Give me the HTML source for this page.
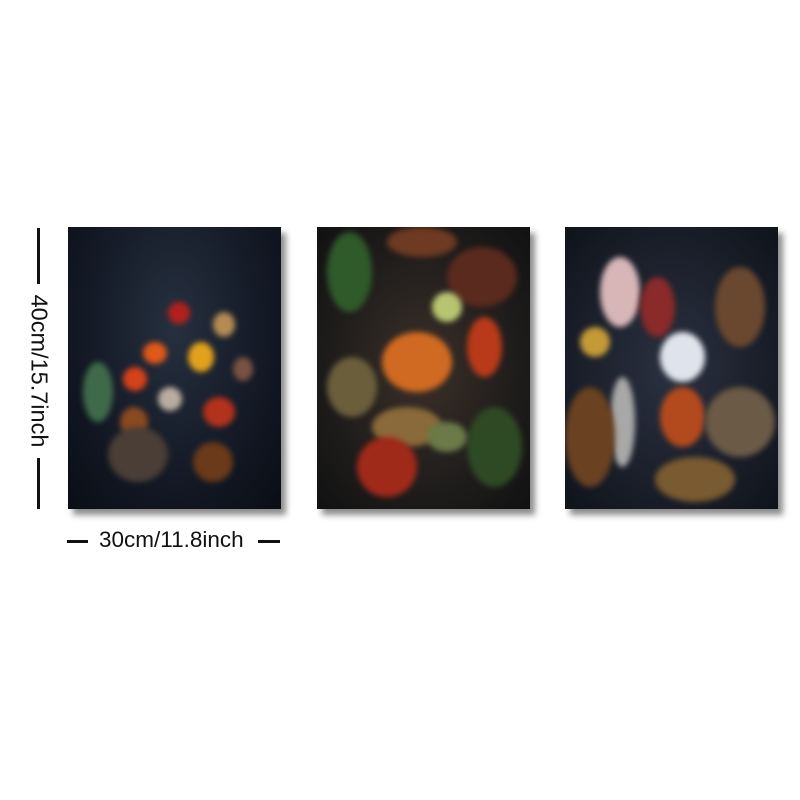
<!DOCTYPE html>
<html><head><style>
body{margin:0;width:800px;height:800px;background:#fff;position:relative;overflow:hidden;font-family:"Liberation Sans",sans-serif}
.p{position:absolute;top:227px;width:213px;height:282px;box-shadow:5px 6px 6px rgba(0,0,0,.45);overflow:hidden}
.b{position:absolute;border-radius:50%;filter:blur(3px)}
.l{position:absolute;background:#111}
</style></head><body>
<div class="p" style="left:68px;background:radial-gradient(ellipse at 50% 35%,#26303f 0%,#131925 60%,#0a0d14 100%)">
<div class="b" style="left:100px;top:75px;width:22px;height:22px;background:#b3201c"></div>
<div class="b" style="left:75px;top:115px;width:24px;height:22px;background:#e0581a"></div>
<div class="b" style="left:120px;top:115px;width:26px;height:30px;background:#e2a11d"></div>
<div class="b" style="left:145px;top:85px;width:22px;height:25px;background:#b58b52"></div>
<div class="b" style="left:165px;top:130px;width:20px;height:24px;background:#7a5242"></div>
<div class="b" style="left:55px;top:140px;width:24px;height:24px;background:#d4421a"></div>
<div class="b" style="left:52px;top:180px;width:28px;height:30px;background:#8a4a20"></div>
<div class="b" style="left:135px;top:170px;width:32px;height:30px;background:#b3321c"></div>
<div class="b" style="left:90px;top:160px;width:24px;height:24px;background:#b9ada0"></div>
<div class="b" style="left:15px;top:135px;width:30px;height:60px;background:#3f6a4a"></div>
<div class="b" style="left:40px;top:200px;width:60px;height:55px;background:#4a3e36"></div>
<div class="b" style="left:125px;top:215px;width:40px;height:40px;background:#6a3a1a"></div>
</div>
<div class="p" style="left:317px;background:radial-gradient(ellipse at 50% 50%,#3b3028 0%,#1f1d1c 60%,#111 100%)">
<div class="b" style="left:10px;top:5px;width:45px;height:80px;background:#2f5a2a"></div>
<div class="b" style="left:70px;top:0px;width:70px;height:30px;background:#6e3a22"></div>
<div class="b" style="left:130px;top:20px;width:70px;height:60px;background:#5a2a1e"></div>
<div class="b" style="left:65px;top:105px;width:70px;height:60px;background:#d06a22"></div>
<div class="b" style="left:115px;top:65px;width:30px;height:30px;background:#b7c570"></div>
<div class="b" style="left:10px;top:130px;width:50px;height:60px;background:#6b5e3a"></div>
<div class="b" style="left:150px;top:90px;width:35px;height:60px;background:#b83a1a"></div>
<div class="b" style="left:55px;top:180px;width:70px;height:40px;background:#8a6a3a"></div>
<div class="b" style="left:150px;top:180px;width:55px;height:80px;background:#2e4a24"></div>
<div class="b" style="left:40px;top:210px;width:60px;height:60px;background:#a02a1a"></div>
<div class="b" style="left:110px;top:195px;width:40px;height:30px;background:#6a7a48"></div>
</div>
<div class="p" style="left:565px;background:radial-gradient(ellipse at 50% 50%,#2a3140 0%,#1a1f2a 60%,#0f131a 100%)">
<div class="b" style="left:35px;top:30px;width:40px;height:70px;background:#d8b6b8"></div>
<div class="b" style="left:75px;top:50px;width:35px;height:60px;background:#8a2a2a"></div>
<div class="b" style="left:95px;top:105px;width:45px;height:50px;background:#dfe4ec"></div>
<div class="b" style="left:15px;top:100px;width:30px;height:30px;background:#c49a38"></div>
<div class="b" style="left:95px;top:160px;width:45px;height:60px;background:#b34a1e"></div>
<div class="b" style="left:45px;top:150px;width:25px;height:90px;background:#a8a8a8"></div>
<div class="b" style="left:140px;top:160px;width:70px;height:70px;background:#6a5a46"></div>
<div class="b" style="left:0px;top:160px;width:50px;height:100px;background:#6a4222"></div>
<div class="b" style="left:150px;top:40px;width:50px;height:80px;background:#6a4830"></div>
<div class="b" style="left:90px;top:230px;width:80px;height:45px;background:#7a5a30"></div>
</div>
<div class="l" style="left:37px;top:228px;width:3px;height:56px"></div>
<div class="l" style="left:37px;top:458px;width:3px;height:51px"></div>
<div style="position:absolute;left:39px;top:371px;transform:translate(-50%,-50%) rotate(90deg);font-size:23.5px;color:#111;white-space:nowrap">40cm/15.7inch</div>
<div class="l" style="left:67px;top:540px;width:21px;height:3px"></div>
<div class="l" style="left:258px;top:540px;width:22px;height:3px"></div>
<div style="position:absolute;left:99px;top:527px;font-size:22.5px;color:#111;white-space:nowrap">30cm/11.8inch</div>
</body></html>
